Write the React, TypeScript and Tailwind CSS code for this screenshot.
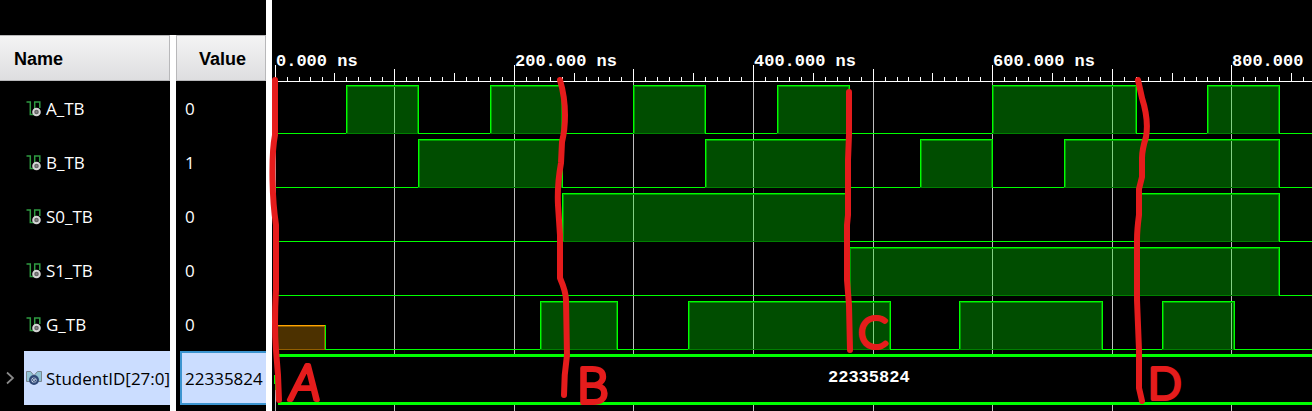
const HIGH = 48;
const ORIGIN = 3;
const PX_PER_NS = 1.196;
const toX = (ns: number) => Math.round(ORIGIN - 0.4 + ns * PX_PER_NS);

type Signal = { name: string; value: string; pulses: [number, number][] };

const signals: Signal[] = [
  { name: "A_TB", value: "0", pulses: [[60, 120], [180, 240], [300, 360], [420, 480], [600, 720], [780, 840]] },
  { name: "B_TB", value: "1", pulses: [[120, 240], [360, 480], [540, 600], [660, 840]] },
  { name: "S0_TB", value: "0", pulses: [[240, 480], [720, 840]] },
  { name: "S1_TB", value: "0", pulses: [[480, 840]] },
  { name: "G_TB", value: "0", pulses: [[222, 286], [346, 514.5], [572, 692], [742, 802]] },
];

const ticks = Array.from({ length: 200 }, (_, i) => i * 10);
const tickHeight = (ns: number) => (ns % 200 === 0 ? 16 : ns % 100 === 0 ? 12 : ns % 50 === 0 ? 8 : 4);

function SignalIcon() {
  return (
    <svg aria-hidden="true" viewBox="0 0 16 16" className="h-4 w-4 shrink-0">
      <path d="M0.5 0.900H4.300V13.500H8.700V0.900H13.800V7" fill="none" stroke="#2f9a41" strokeWidth="1.500" />
      <circle cx="10.500" cy="11" r="3.300" fill="#666" stroke="#d4d4d4" strokeWidth="2" />
      <circle cx="10.500" cy="11" r="1" fill="#888" />
    </svg>
  );
}

function BusIcon() {
  return (
    <svg aria-hidden="true" viewBox="0 0 16 16" className="h-4 w-4 shrink-0">
      <path d="M0.500 0.500H4.500L8 4.500L11.500 0.500H15.500V10.500H11L8 7L5 10.500H0.500Z" fill="#91c3d4" stroke="#7b8791" />
      <circle cx="8" cy="9" r="3.800" fill="#d5e0ee" stroke="#304978" strokeWidth="2.400" />
      <path d="M9.500 7.800A1.700 1.700 0 1 0 9.500 10.200V9H8.300" fill="none" stroke="#304978" />
    </svg>
  );
}

function SignalTable() {
  return (
    <table className="w-[266px] table-fixed border-separate border-spacing-0 text-left font-['Open_Sans','Noto_Sans',sans-serif] text-[17px] leading-6 text-white">
      <thead className="font-['Liberation_Sans',Arial,sans-serif] text-lg text-black">
        <tr className="h-[46px]">
          <th className="w-[176px] border-r-[6px] border-white p-0 font-bold">
            <div className="flex h-[46px] items-center border-y border-r border-[#b8b8ba] bg-linear-to-b from-[#f4f4f4] to-[#dedee0] pt-0.5 pl-3.5">Name</div>
          </th>
          <th className="p-0 font-bold">
            <div className="flex h-[46px] items-center border border-[#b8b8ba] bg-linear-to-b from-[#f4f4f4] to-[#dedee0] pt-0.5 pl-[22px]">Value</div>
          </th>
        </tr>
      </thead>
      <tbody>
        {signals.map((s) => (
          <tr key={s.name} className="h-[54px]">
            <td className="border-r-[6px] border-white p-0 pt-0.5 pl-[26px]">
              <div className="flex items-center gap-1">
                <SignalIcon />
                {s.name}
              </div>
            </td>
            <td className="p-0 pt-0.5 pl-[9px]">{s.value}</td>
          </tr>
        ))}
        <tr className="h-[54px] text-black">
          <td className="border-r-[6px] border-white p-0">
            <div className="flex h-[54px] items-center">
              <button type="button" aria-label="Expand StudentID" className="flex h-full w-6 shrink-0 items-center pl-1">
                <svg aria-hidden="true" viewBox="0 0 12 16" className="h-4 w-3">
                  <path d="M3 2.500L9 8L3 13.500" fill="none" stroke="#8a8a8a" strokeWidth="1.700" />
                </svg>
              </button>
              <div className="flex h-full min-w-0 flex-1 items-center gap-1 overflow-hidden bg-[#cbddff] pt-0.5 pl-0.5">
                <BusIcon />
                StudentID[27:0]
              </div>
            </div>
          </td>
          <td className="p-0 pl-1">
            <div className="flex h-[54px] items-center overflow-hidden border-y-2 border-l-2 border-[#3c94cf] bg-[#cbddff] pt-0.5 pl-[3px]">22335824</div>
          </td>
        </tr>
        <tr aria-hidden="true" className="h-1.5">
          <td className="border-r-[6px] border-white p-0" />
          <td className="p-0" />
        </tr>
      </tbody>
    </table>
  );
}

function Trace({ pulses, top }: { pulses: [number, number][]; top: number }) {
  const low = top + HIGH;
  return (
    <g shapeRendering="crispEdges">
      <rect x={ORIGIN} y={low} width="100%" height="1" fill="#00ff00" />
      {pulses.map(([from, to]) => {
        const x = toX(from);
        const w = toX(to) - x;
        return (
          <g key={from}>
            <rect x={x} y={low} width={w} height="1" fill="#007f00" />
            <rect x={x} y={top} width={w} height={HIGH} fill="#00ff00" fillOpacity="0.300" />
            <path d={`M${x + 1.5} ${low}V${top + 1.5}H${x + w - 0.5}V${low}`} fill="none" stroke="#009c00" />
            <path d={`M${x + 0.5} ${low}V${top + 0.5}H${x + w + 0.5}V${low + 1}`} fill="none" stroke="#00ff00" />
          </g>
        );
      })}
    </g>
  );
}

function Waveform() {
  return (
    <svg role="img" aria-label="Waveform" className="block h-[411px] w-full font-['Liberation_Mono','Courier_New',monospace] text-[17px] font-bold">
      <g shapeRendering="crispEdges">
        {ticks.map((ns) => (
          <g key={ns}>
            {ns % 100 === 0 && <rect x={toX(ns)} y="82" width="1" height="100%" fill="#bebebe" />}
            <rect x={toX(ns)} y={81 - tickHeight(ns)} width="1" height={tickHeight(ns)} fill="#fff" />
          </g>
        ))}
        <rect x={ORIGIN} y="81" width="100%" height="1" fill="#fff" />
      </g>
      {[0, 200, 400, 600, 800].map((ns) => (
        <text key={ns} x={toX(ns) + 1} y="66" fill="#fff">{`${ns}.000 ns`}</text>
      ))}
      {signals.map((s, i) => (
        <Trace key={s.name} pulses={s.pulses} top={85 + i * 54} />
      ))}
      <g shapeRendering="crispEdges">
        <rect x="3" y="325" width="50" height="25" fill="#4c3100" />
        <path d="M3 326.500H52.500V349.500H3" fill="none" stroke="#925f00" />
        <rect x="3" y="325" width="50" height="1" fill="#ffa500" />
        <rect x="53" y="325" width="1" height="25" fill="#00ff00" />
        <rect x="6" y="354" width="100%" height="51" fill="#00ff00" />
        <rect x="6" y="357" width="100%" height="45" fill="#000" />
        <rect x="2" y="375" width="2" height="9" fill="#00ff00" />
        <rect x="3" y="368" width="1" height="22" fill="#00ff00" />
      </g>
      <text x="556" y="382" fill="#fff">22335824</text>
    </svg>
  );
}

const markers = [
  "M275 80L275 135Q272 150 272.500 180Q273 205 276 225L276 290Q274 325 276 350L278 375L279 400",
  "M560 80Q565 97 565 115Q565 130 562 142L561 163Q557 185 558 205L560 235L560 278Q566 292 566 300L567 355Q564 375 564 395",
  "M849 92L849 135L848 160L848 215L847 225L847 280L849 305L850 350",
  "M1138 80L1142 98Q1149 120 1146 137Q1142 150 1142 158L1142 177L1139 189L1139 215Q1137 230 1137 240L1137 300L1139 350L1139 388L1142 401",
];

function Annotations() {
  return (
    <svg
      role="img"
      aria-label="Phase markers A to D"
      className="pointer-events-none absolute inset-0 h-full w-full font-['Lato','Liberation_Sans',sans-serif] font-light"
      stroke="#e51c1c"
      strokeLinecap="round"
      strokeLinejoin="round"
    >
      {markers.map((d) => (
        <path key={d} d={d} fill="none" strokeWidth="6" />
      ))}
      <g fill="#e51c1c" strokeWidth="4">
        <text x="290" y="400" className="text-[50px] italic">A</text>
        <text x="577" y="403" className="text-[50px]">B</text>
        <text x="858" y="348" className="text-[44px]">C</text>
        <text x="1148" y="399" className="text-[44px]">D</text>
      </g>
    </svg>
  );
}

export default function App() {
  return (
    <main className="relative flex min-h-screen w-full overflow-hidden bg-black">
      <section aria-label="Signals" className="shrink-0 pt-[35px]">
        <SignalTable />
      </section>
      <section aria-label="Timeline" className="min-w-0 flex-1 border-l-[6px] border-white">
        <Waveform />
      </section>
      <Annotations />
    </main>
  );
}
